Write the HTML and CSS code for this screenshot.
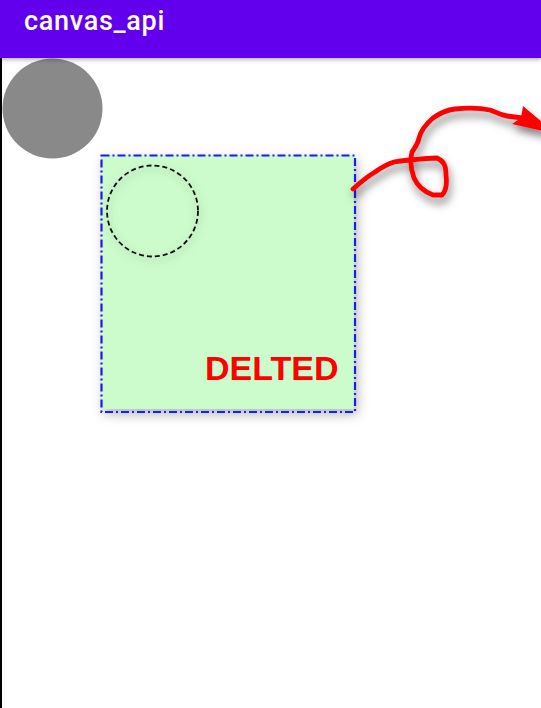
FILE: index.html
```html
<!DOCTYPE html>
<html>
<head>
<meta charset="utf-8">
<link rel="stylesheet" href="styles.css">
</head>
<body>
<header class="appbar"><span class="title">canvas_api</span></header>
<main class="stage">
<svg class="canvas" width="539" height="650" viewBox="2 58 539 650" xmlns="http://www.w3.org/2000/svg">
  <defs>
    <filter id="sh" x="-20%" y="-20%" width="150%" height="150%">
      <feDropShadow dx="3" dy="5" stdDeviation="6" flood-color="#000" flood-opacity="0.3"/>
    </filter>
    <filter id="sh2" x="-30%" y="-30%" width="160%" height="160%">
      <feDropShadow dx="2" dy="6" stdDeviation="4.5" flood-color="#000" flood-opacity="0.5"/>
    </filter>
    <filter id="sh3" x="-30%" y="-30%" width="160%" height="160%">
      <feDropShadow dx="1" dy="3" stdDeviation="4" flood-color="#000" flood-opacity="0.35"/>
    </filter>
  </defs>
  <circle cx="52.5" cy="108.5" r="50" fill="#898989"/>
  <g filter="url(#sh)">
    <rect x="101" y="155" width="253" height="254" fill="#ccfccc"/>
  </g>
  <rect x="101.5" y="155.5" width="253.5" height="256.5" fill="none" stroke="#1a1aff" stroke-width="2.2" stroke-dasharray="8 3 2 3"/>
  <circle class="dash" cx="152.5" cy="211" r="45.5" fill="none" stroke="#111" stroke-width="1.8" stroke-dasharray="5 3" filter="url(#sh3)"/>
  <text class="label" x="205" y="380">DELTED</text>
  <g filter="url(#sh2)">
    <path d="M353 189 C362 181 368 176 375 172 C382 167 388 164 394 162 C400 161 405 160 411 160 C420 159 430 158 437 158 C444 161 446 166 446 175 C447 183 446 191 442 195 L433 195 C425 192 418 187 414 178 C411 170 410 160 412 152 C415 147 418 144 419 138 C421 130 426 124 433 118 C440 113 446 110 455 109 C465 108 480 108 490 110 C496 112 500 115 507 116 L522 118" fill="none" stroke="#ff0000" stroke-width="4.8" stroke-linecap="round" stroke-linejoin="round"/>
    <path d="M523 106 L556 134 L512 124 L521 118 Z" fill="#ff0000"/>
  </g>
</svg>
</main>
</body>
</html>
```
FILE: styles.css
```css
html, body {
  margin: 0;
  padding: 0;
  background: #fff;
  overflow: hidden;
}
body {
  width: 541px;
  height: 708px;
  font-family: Roboto, "Noto Sans", sans-serif;
}
.appbar {
  position: relative;
  z-index: 2;
  height: 58px;
  background: #6200ee;
  box-shadow: 0 2px 4px rgba(0,0,0,0.28);
  display: flex;
  align-items: flex-start;
  padding-left: 24px;
  box-sizing: border-box;
}
.title {
  color: #fff;
  font-size: 27px;
  font-weight: 500;
  letter-spacing: 0.7px;
  line-height: 1;
  margin-top: 8px;
}
.stage {
  height: 650px;
  border-left: 2px solid #000;
  display: flex;
}
.canvas {
  display: block;
}
.label {
  font-family: "Liberation Sans", Arial, sans-serif;
  font-weight: bold;
  font-size: 34px;
  fill: #ff0000;
}
```
